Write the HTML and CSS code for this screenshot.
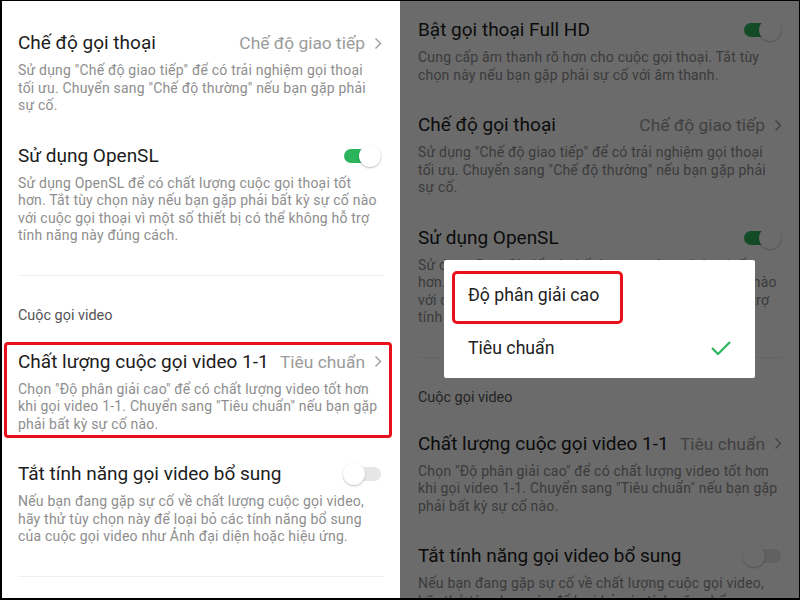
FILE: index.html
```html
<!DOCTYPE html>
<html>

<head>
  <meta charset="utf-8">
  <link rel="stylesheet" href="styles.css">
  <title>Cài đặt cuộc gọi</title>
</head>

<body>
  <div class="frame">
    <!-- settings list -->
    <section class="panel">
      <div class="list list-main">
        <div class="item">
          <div class="item-head">
            <span class="item-title">Chế độ gọi thoại</span>
            <span class="item-value">Chế độ giao tiếp
              <svg class="chev" width="8" height="13" viewBox="0 0 8 13"><path d="M1.5 1.5 L6.5 6.5 L1.5 11.5" /></svg>
            </span>
          </div>
          <p class="item-desc">Sử dụng "Chế độ giao tiếp" để có trải nghiệm gọi thoại<br>tối ưu. Chuyển sang "Chế độ thường" nếu bạn gặp phải<br>sự cố.</p>
        </div>
        <div class="item">
          <div class="item-head">
            <span class="item-title">Sử dụng OpenSL</span>
            <span class="switch on"></span>
          </div>
          <p class="item-desc">Sử dụng OpenSL để có chất lượng cuộc gọi thoại tốt<br>hơn. Tắt tùy chọn này nếu bạn gặp phải bất kỳ sự cố nào<br>với cuộc gọi thoại vì một số thiết bị có thể không hỗ trợ<br>tính năng này đúng cách.</p>
        </div>
        <div class="divider"></div>
        <div class="group-label">Cuộc gọi video</div>
        <div class="item marked">
          <div class="item-head">
            <span class="item-title">Chất lượng cuộc gọi video 1-1</span>
            <span class="item-value">Tiêu chuẩn
              <svg class="chev" width="8" height="13" viewBox="0 0 8 13"><path d="M1.5 1.5 L6.5 6.5 L1.5 11.5" /></svg>
            </span>
          </div>
          <p class="item-desc">Chọn "Độ phân giải cao" để có chất lượng video tốt hơn<br>khi gọi video 1-1. Chuyển sang "Tiêu chuẩn" nếu bạn gặp<br>phải bất kỳ sự cố nào.</p>
        </div>
        <div class="item">
          <div class="item-head">
            <span class="item-title">Tắt tính năng gọi video bổ sung</span>
            <span class="switch"></span>
          </div>
          <p class="item-desc">Nếu bạn đang gặp sự cố về chất lượng cuộc gọi video,<br>hãy thử tùy chọn này để loại bỏ các tính năng bổ sung<br>của cuộc gọi video như Ảnh đại diện hoặc hiệu ứng.</p>
        </div>
        <div class="divider"></div>
      </div>
    </section>

    <!-- same list with the quality picker open -->
    <section class="panel">
      <div class="list list-picker">
        <div class="item">
          <div class="item-head">
            <span class="item-title">Bật gọi thoại Full HD</span>
            <span class="switch on"></span>
          </div>
          <p class="item-desc">Cung cấp âm thanh rõ hơn cho cuộc gọi thoại. Tắt tùy<br>chọn này nếu bạn gặp phải sự cố với âm thanh.</p>
        </div>
        <div class="item">
          <div class="item-head">
            <span class="item-title">Chế độ gọi thoại</span>
            <span class="item-value">Chế độ giao tiếp
              <svg class="chev" width="8" height="13" viewBox="0 0 8 13"><path d="M1.5 1.5 L6.5 6.5 L1.5 11.5" /></svg>
            </span>
          </div>
          <p class="item-desc">Sử dụng "Chế độ giao tiếp" để có trải nghiệm gọi thoại<br>tối ưu. Chuyển sang "Chế độ thường" nếu bạn gặp phải<br>sự cố.</p>
        </div>
        <div class="item">
          <div class="item-head">
            <span class="item-title">Sử dụng OpenSL</span>
            <span class="switch on"></span>
          </div>
          <p class="item-desc">Sử dụng OpenSL để có chất lượng cuộc gọi thoại tốt<br>hơn. Tắt tùy chọn này nếu bạn gặp phải bất kỳ sự cố nào<br>với cuộc gọi thoại vì một số thiết bị có thể không hỗ trợ<br>tính năng này đúng cách.</p>
        </div>
        <div class="divider"></div>
        <div class="group-label">Cuộc gọi video</div>
        <div class="item">
          <div class="item-head">
            <span class="item-title">Chất lượng cuộc gọi video 1-1</span>
            <span class="item-value">Tiêu chuẩn
              <svg class="chev" width="8" height="13" viewBox="0 0 8 13"><path d="M1.5 1.5 L6.5 6.5 L1.5 11.5" /></svg>
            </span>
          </div>
          <p class="item-desc">Chọn "Độ phân giải cao" để có chất lượng video tốt hơn<br>khi gọi video 1-1. Chuyển sang "Tiêu chuẩn" nếu bạn gặp<br>phải bất kỳ sự cố nào.</p>
        </div>
        <div class="item">
          <div class="item-head">
            <span class="item-title">Tắt tính năng gọi video bổ sung</span>
            <span class="switch"></span>
          </div>
          <p class="item-desc">Nếu bạn đang gặp sự cố về chất lượng cuộc gọi video,<br>hãy thử tùy chọn này để loại bỏ các tính năng bổ sung<br>của cuộc gọi video như Ảnh đại diện hoặc hiệu ứng.</p>
        </div>
      </div>

      <div class="shade"></div>
      <div class="dialog">
        <div class="option marked">Độ phân giải cao</div>
        <div class="option">Tiêu chuẩn
          <svg class="check" width="22" height="16" viewBox="0 0 22 16"><polyline points="2,8 8,14 20,2" /></svg>
        </div>
      </div>
    </section>
  </div>
</body>

</html>
```

FILE: styles.css
```css
* {
  box-sizing: border-box;
}

body {
  margin: 0;
  font-family: Roboto, "Noto Sans", sans-serif;
  background-color: #fff;
}

.frame {
  position: relative;
  display: flex;
  width: 800px;
  height: 600px;
  overflow: hidden;
  background: #fff;
}

/* thin black edge round the whole shot */
.frame::after {
  content: '';
  position: absolute;
  top: 0;
  left: 0;
  right: 0;
  bottom: 0;
  border-style: solid;
  border-color: #000;
  border-width: 1px 1px 2px 2px;
  z-index: 10;
}

.panel {
  position: relative;
  width: 400px;
  height: 100%;
  overflow: hidden;
}

.list-main {
  padding-top: 16px;
}

.list-picker {
  padding-top: 3px;
}

.item {
  position: relative;
  padding: 15px 18px 14px 18px;
}

.item-head {
  display: flex;
  align-items: center;
  justify-content: space-between;
  height: 24px;
}

.item-title {
  font-size: 19px;
  line-height: 24px;
  color: #1c1c1c;
  white-space: nowrap;
}

.item-value {
  display: flex;
  align-items: center;
  font-size: 17.4px;
  line-height: 24px;
  color: #9b9b9b;
  white-space: nowrap;
}

.chev {
  margin-left: 9px;
}

.chev path {
  fill: none;
  stroke: #9b9b9b;
  stroke-width: 1.4;
}

.item-desc {
  margin: 7px 0 0;
  font-size: 14px;
  letter-spacing: 0.2px;
  line-height: 17.5px;
  color: #8e8e8e;
  white-space: nowrap;
}

/* red annotation frame */
.item.marked::after {
  content: '';
  position: absolute;
  top: 7px;
  bottom: 9px;
  left: 4px;
  right: 8px;
  border: 3px solid #e8101a;
  border-radius: 4px;
}

.divider {
  height: 1px;
  background: #efefef;
  margin: 16px 17px 0 18px;
}

.group-label {
  padding: 30px 18px 9px;
  font-size: 14.4px;
  line-height: 20px;
  color: #555;
}

/* switches */
.switch {
  position: relative;
  width: 38px;
  height: 22px;
  margin-right: 1px;
}

.switch::before {
  content: '';
  position: absolute;
  left: 1px;
  right: 0;
  top: 4px;
  height: 14px;
  border-radius: 7px;
  background: #e6e6e6;
}

.switch::after {
  content: '';
  position: absolute;
  top: 0;
  left: 0;
  width: 22px;
  height: 22px;
  border-radius: 50%;
  background: #fff;
  box-shadow: 0 1px 2px rgba(0, 0, 0, 0.25);
}

.switch.on::before {
  background: #2bb45c;
}

.switch.on::after {
  left: auto;
  right: 0;
}

/* dimmed backdrop and picker */
.shade {
  position: absolute;
  top: 0;
  left: 0;
  right: 0;
  bottom: 0;
  background: rgba(0, 0, 0, 0.58);
}

.dialog {
  position: absolute;
  left: 44px;
  top: 260px;
  width: 311px;
  padding: 8px 0 4px;
  background: #fff;
  border-radius: 2px;
}

.option {
  position: relative;
  display: flex;
  align-items: center;
  justify-content: space-between;
  height: 53px;
  padding: 0 23px 0 24px;
  font-size: 17.7px;
  color: #222;
}

.option.marked::after {
  content: '';
  position: absolute;
  left: 8px;
  top: 3px;
  width: 165px;
  height: 47px;
  border: 3px solid #e8101a;
  border-radius: 5px;
}

.check polyline {
  fill: none;
  stroke: #2db55d;
  stroke-width: 2.2;
}
```
